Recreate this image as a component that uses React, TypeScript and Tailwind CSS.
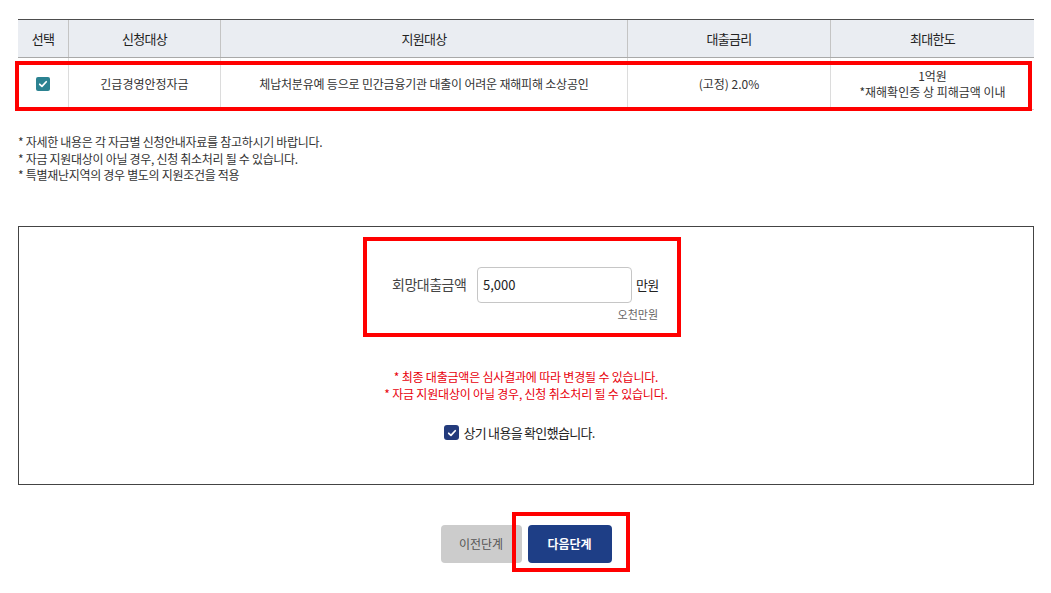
import React from 'react';

const cols = 'grid grid-cols-[50px_152px_407px_203px_204px]';

function CheckMark({ className }: { className?: string }) {
  return (
    <svg viewBox="0 0 14 14" className={className} fill="none">
      <path d="M3.2 7.3l2.6 2.5 5-5.4" stroke="white" strokeWidth="2" strokeLinecap="round" strokeLinejoin="round" />
    </svg>
  );
}

function LoanTable() {
  const head = ['선택', '신청대상', '지원대상', '대출금리', '최대한도'];
  return (
    <div className="border-t border-[#4d4d4d]">
      <div className={`${cols} h-[38px] bg-[#eaedf2] border-b border-[#a9a9a9]`}>
        {head.map((h, i) => (
          <div
            key={h}
            className={`flex items-center justify-center text-[13px] tracking-[-0.7px] text-[#222] ${i > 0 ? 'border-l border-[#c4c4c4]' : ''}`}
          >
            {h}
          </div>
        ))}
      </div>
      <div className="relative">
        <div className={`${cols} h-[52px] border-b border-[#cfcfcf] text-[12px] text-[#333]`}>
          <div className="flex items-center justify-center">
            <span className="flex h-[14px] w-[14px] items-center justify-center rounded-[2px] bg-[#2c8291]">
              <CheckMark className="h-[12px] w-[12px]" />
            </span>
          </div>
          <div className="flex items-center justify-center border-l border-[#dcdcdc]">긴급경영안정자금</div>
          <div className="flex items-center justify-center border-l border-[#dcdcdc] tracking-[-0.2px]">
            체납처분유예 등으로 민간금융기관 대출이 어려운 재해피해 소상공인
          </div>
          <div className="flex items-center justify-center border-l border-[#dcdcdc]">(고정) 2.0%</div>
          <div className="flex flex-col items-center justify-center border-l border-[#dcdcdc] leading-[16px]">
            <span>1억원</span>
            <span>*재해확인증 상 피해금액 이내</span>
          </div>
        </div>
        {/* annotation */}
        <div className="pointer-events-none absolute left-[-3px] right-[2px] top-[3px] bottom-[-1px] border-4 border-[#ff0000]" />
      </div>
    </div>
  );
}

export default function App() {
  return (
    <div
      className="w-[1051px] h-[593px] bg-white px-[18px] pt-[19px]"
      style={{ fontFamily: '"Noto Sans CJK KR", "Noto Sans", sans-serif' }}
    >
      <div className="w-[1016px]">
        <LoanTable />

        <div className="mt-[24px] text-[12px] leading-[16.5px] tracking-[-0.3px] text-[#333]">
          <p>* 자세한 내용은 각 자금별 신청안내자료를 참고하시기 바랍니다.</p>
          <p>* 자금 지원대상이 아닐 경우, 신청 취소처리 될 수 있습니다.</p>
          <p>* 특별재난지역의 경우 별도의 지원조건을 적용</p>
        </div>

        <div className="mt-[42px] flex h-[259px] flex-col items-center border border-[#444] pt-[10px]">
          <div className="ml-[-8px] w-[318px] h-[100px] border-4 border-[#ff0000] pt-[26px] pl-[25px]">
            <div className="flex items-center">
              <span className="w-[76px] text-[14px] tracking-[-0.5px] text-[#444]">회망대출금액</span>
              <div className="ml-[9px] flex h-[36px] w-[155px] items-center rounded-[4px] border border-[#c6c6c6] pl-[5px] text-[13px] text-[#222]">
                5,000
              </div>
              <span className="ml-[4px] text-[13px] tracking-[-0.8px] text-[#222]">만원</span>
            </div>
            <div className="mt-[4px] w-[266px] text-right text-[11px] leading-[14px] text-[#666]">
              오천만원
            </div>
          </div>

          <div className="mt-[31px] text-center text-[12px] leading-[17px] tracking-[-0.2px] text-[#e8000b]">
            <p>* 최종 대출금액은 심사결과에 따라 변경될 수 있습니다.</p>
            <p>* 자금 지원대상이 아닐 경우, 신청 취소처리 될 수 있습니다.</p>
          </div>

          <label className="mt-[22px] mr-[13px] flex items-center gap-[4px] text-[13px] leading-[18px] tracking-[-0.7px] text-[#222]">
            <span className="flex h-[15px] w-[15px] items-center justify-center rounded-[3px] bg-[#233b7c]">
              <CheckMark className="h-[12px] w-[12px]" />
            </span>
            상기 내용을 확인했습니다.
          </label>
        </div>

        <div className="mt-[40px] flex justify-center gap-[6px]">
          <button className="h-[38px] w-[81px] rounded-[4px] bg-[#cccccc] text-[12px] text-[#555]">
            이전단계
          </button>
          <div className="relative">
            <button className="h-[38px] w-[84px] rounded-[4px] bg-[#1e3e86] text-[12px] font-bold text-white">
              다음단계
            </button>
            <div className="pointer-events-none absolute left-[-16px] right-[-18px] top-[-13px] bottom-[-9px] border-4 border-[#ff0000]" />
          </div>
        </div>
      </div>
    </div>
  );
}
